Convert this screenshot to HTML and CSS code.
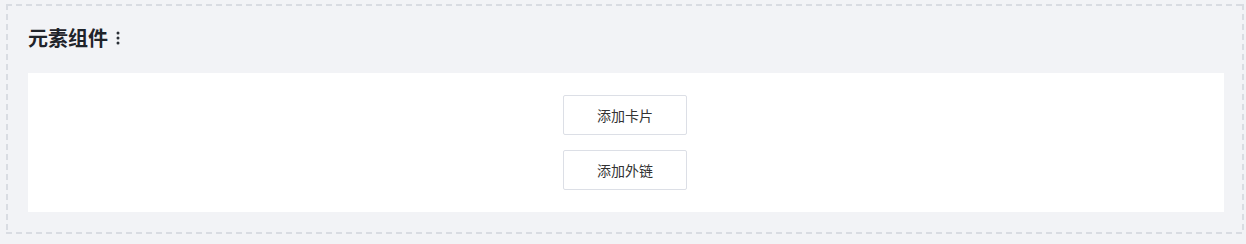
FILE: index.html
```html
<!DOCTYPE html>
<html lang="zh">
<head>
<meta charset="utf-8">
<link rel="stylesheet" href="styles.css">
</head>
<body>
<div class="frame">
  <div class="header">
    <span class="title">元素组件</span>
    <svg class="more" width="4" height="14" viewBox="0 0 4 14"><circle cx="2" cy="2" r="1.5"/><circle cx="2" cy="7" r="1.5"/><circle cx="2" cy="12" r="1.5"/></svg>
  </div>
  <div class="card">
    <button class="btn">添加卡片</button>
    <button class="btn">添加外链</button>
  </div>
</div>
</body>
</html>
```
FILE: styles.css
```css
html, body {
  margin: 0;
  padding: 0;
  background: #f2f3f6;
  font-family: "Noto Sans CJK SC", "Noto Sans", sans-serif;
}
body {
  padding: 4px 2px 0 6px;
}
.frame {
  box-sizing: border-box;
  width: 1238px;
  height: 230px;
  padding: 1px 20px 0 22px;
  background-image:
    repeating-linear-gradient(90deg, #d9dce2 0 6px, transparent 6px 10px),
    repeating-linear-gradient(90deg, #d9dce2 0 6px, transparent 6px 10px),
    repeating-linear-gradient(180deg, #d9dce2 0 6px, transparent 6px 10px),
    repeating-linear-gradient(180deg, #d9dce2 0 6px, transparent 6px 10px);
  background-size: 100% 2px, 100% 2px, 2px 100%, 2px 100%;
  background-position: 0 0, 0 100%, 0 0, 100% 0;
  background-repeat: no-repeat;
}
.header {
  height: 68px;
  display: flex;
  align-items: center;
  gap: 8px;
  padding-bottom: 2px;
  box-sizing: border-box;
}
.title {
  font-size: 20px;
  font-weight: 700;
  color: #1f2329;
  line-height: 26px;
}
.more {
  fill: #2a2f36;
}
.card {
  background: #fff;
  height: 139px;
  box-sizing: border-box;
  padding: 22px 0;
  display: flex;
  flex-direction: column;
  align-items: center;
  gap: 15px;
}
.btn {
  width: 124px;
  height: 40px;
  box-sizing: border-box;
  border: 1px solid #dcdfe6;
  border-radius: 2px;
  background: #fff;
  font-family: "Noto Sans CJK SC", "Noto Sans", sans-serif;
  font-size: 14px;
  color: #333;
  padding: 0;
  margin-right: 2px;
}
```
